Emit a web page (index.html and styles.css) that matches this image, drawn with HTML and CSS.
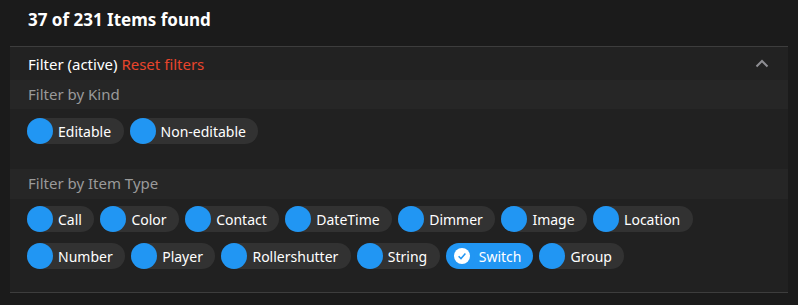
FILE: index.html
```html
<!DOCTYPE html>
<html lang="en">
<head>
    <meta charset="UTF-8">
    <meta name="viewport" content="width=device-width, initial-scale=1.0">
    <title>Items</title>
    <link rel="stylesheet" href="styles.css">
</head>
<body>
    <h1 class="title">37 of 231 Items found</h1>

    <div class="panel">
        <div class="panel-header">
            <span>Filter (active) <span class="reset">Reset filters</span></span>
            <svg class="chevron" width="14" height="9" viewBox="0 0 14 9">
                <path d="M1.5 7.5 L7 2 L12.5 7.5" fill="none" stroke="#8e8e93" stroke-width="2"/>
            </svg>
        </div>

        <div class="section-title">Filter by Kind</div>
        <div class="chips chips-kind">
            <span class="chip"><span class="avatar"></span>Editable</span>
            <span class="chip"><span class="avatar"></span>Non-editable</span>
        </div>

        <div class="section-title">Filter by Item Type</div>
        <div class="chips chips-type">
            <span class="chip"><span class="avatar"></span>Call</span>
            <span class="chip"><span class="avatar"></span>Color</span>
            <span class="chip"><span class="avatar"></span>Contact</span>
            <span class="chip"><span class="avatar"></span>DateTime</span>
            <span class="chip"><span class="avatar"></span>Dimmer</span>
            <span class="chip"><span class="avatar"></span>Image</span>
            <span class="chip"><span class="avatar"></span>Location</span>
            <span class="chip"><span class="avatar"></span>Number</span>
            <span class="chip"><span class="avatar"></span>Player</span>
            <span class="chip"><span class="avatar"></span>Rollershutter</span>
            <span class="chip"><span class="avatar"></span>String</span>
            <span class="chip selected">
                <span class="avatar">
                    <svg width="16" height="16" viewBox="0 0 16 16">
                        <circle cx="8" cy="8" r="8" fill="#fff"/>
                        <path d="M4.6 8.2 L7 10.6 L11.4 5.6" fill="none" stroke="#2196f3" stroke-width="1.5"/>
                    </svg>
                </span>Switch
            </span>
            <span class="chip"><span class="avatar"></span>Group</span>
        </div>
    </div>
</body>
</html>
```

FILE: styles.css
```css
body {
    margin: 0;
    background-color: #1b1b1b;
    color: #fff;
    font-family: "Noto Sans", "Open Sans", sans-serif;
}

.title {
    margin: 0;
    height: 46px;
    padding-left: 28px;
    font-size: 17px;
    font-weight: bold;
    line-height: 40px;
    box-sizing: border-box;
}

.panel {
    margin: 0 10px;
    background-color: #212121;
    border-top: 1px solid #3d3d3d;
    border-bottom: 1px solid #3d3d3d;
}

.panel-header {
    display: flex;
    align-items: center;
    justify-content: space-between;
    height: 33px;
    padding: 0 19px 0 18px;
    background-color: #222;
    font-size: 15px;
}

.reset {
    color: #e8452c;
}

.chevron {
    display: block;
}

.section-title {
    height: 29px;
    line-height: 28px;
    padding-left: 18px;
    background-color: #262626;
    color: #9a9a9a;
    font-size: 15px;
}

.section-title + .chips + .section-title {
    height: 30px;
}

.chips {
    display: flex;
    flex-wrap: wrap;
    column-gap: 6px;
    row-gap: 11px;
    padding: 0 17px;
}

.chips-kind {
    padding-top: 9px;
    padding-bottom: 25px;
}

.chips-type {
    padding-top: 7px;
    padding-bottom: 23px;
}

.chip {
    display: inline-flex;
    align-items: center;
    height: 26px;
    padding-right: 12.5px;
    border-radius: 13px;
    background-color: #323232;
    font-size: 14px;
    color: #fff;
}

.avatar {
    display: flex;
    align-items: center;
    justify-content: center;
    width: 26px;
    height: 26px;
    margin-right: 5px;
    border-radius: 50%;
    background-color: #2196f3;
}

.chip.selected {
    background-color: #2196f3;
    padding-right: 12px;
}

.chip.selected .avatar {
    margin-right: 4px;
    margin-left: 3px;
}
```
